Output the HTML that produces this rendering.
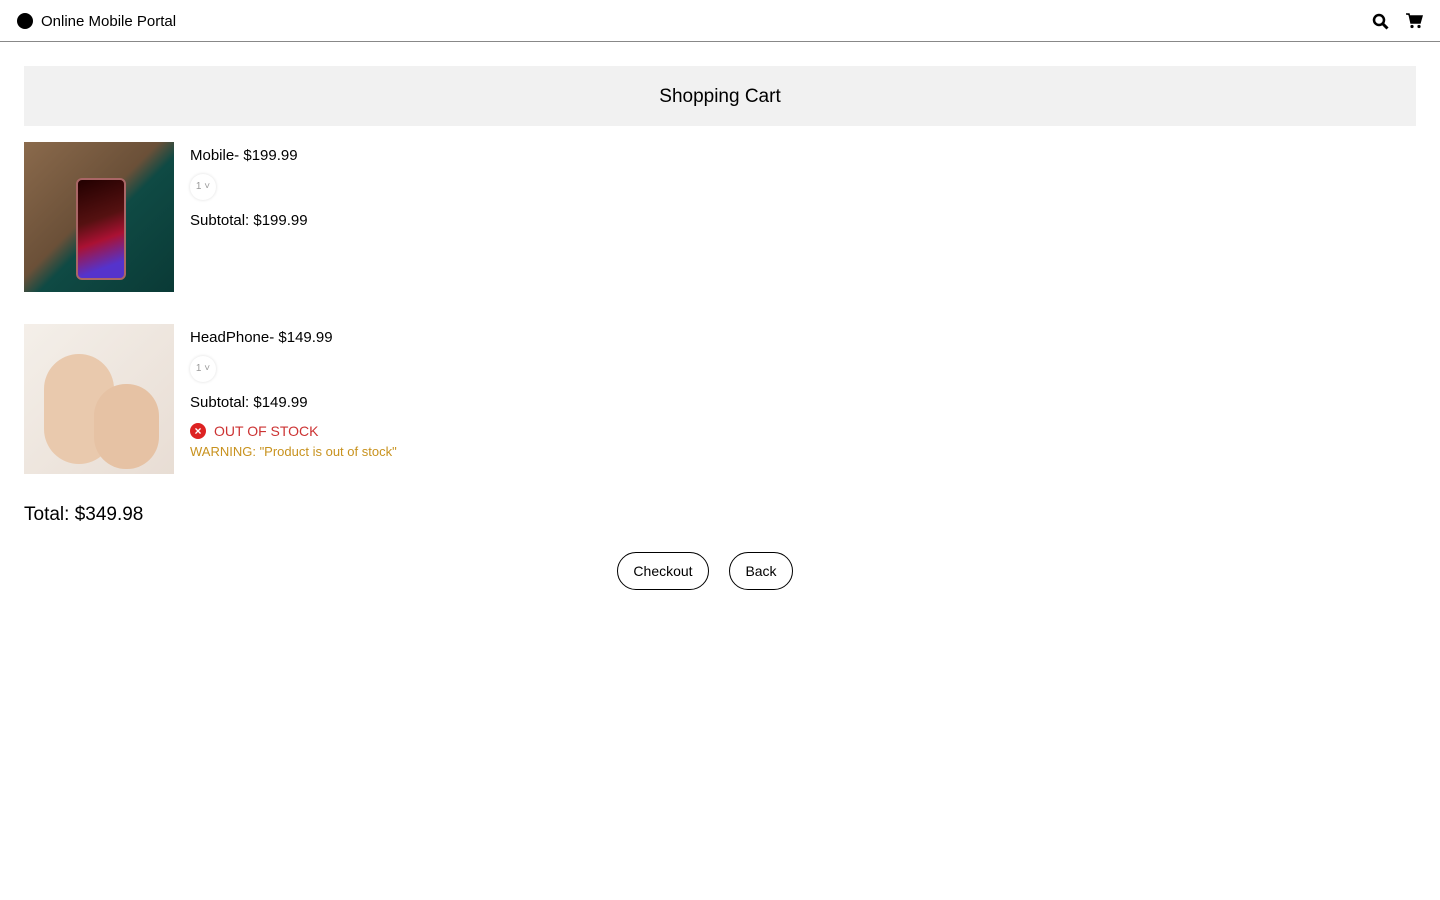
<!DOCTYPE html>
<html><head><style>
body{margin:0;font-family:"Liberation Sans",sans-serif;color:#000;background:#fff}
.nav{height:41px;border-bottom:1px solid #888;position:relative}
.nav .dot{position:absolute;left:17px;top:13px;width:16px;height:16px;border-radius:50%;background:#000}
.nav .t{position:absolute;left:41px;top:13px;font-size:15px}
.hdr{position:absolute;left:24px;top:66px;width:1392px;height:60px;background:#f1f1f1;text-align:center;line-height:62px;font-size:19px}
.img{position:absolute;left:24px;width:150px;height:150px;overflow:hidden}
.tx{position:absolute;left:190px;font-size:15px}
.sel{position:absolute;left:190px;width:26px;height:26px;border-radius:50%;box-shadow:0 0 3px #ddd;font-size:10px;color:#999;line-height:26px;text-align:center}
.btn{position:absolute;top:552px;height:36px;border:1px solid #000;border-radius:19px;font-size:14px;line-height:36px;text-align:center}
</style></head><body>
<div class="nav"><div class="dot"></div><div class="t">Online Mobile Portal</div>
<svg style="position:absolute;left:1372px;top:13px" width="17" height="17" viewBox="0 0 17 17"><circle cx="7" cy="7" r="5" fill="none" stroke="#000" stroke-width="2.5"/><path d="M10.5 10.5L15.5 15.5" stroke="#000" stroke-width="3"/></svg>
<svg style="position:absolute;left:1406px;top:13px" width="17" height="16" viewBox="0 0 17 16"><path d="M0 1h3l2 9h9l2-7H4" fill="#000" stroke="#000" stroke-width="1.5"/><circle cx="6" cy="13.5" r="1.6"/><circle cx="13" cy="13.5" r="1.6"/></svg>
</div>
<div class="hdr">Shopping Cart</div>
<div class="img" style="top:142px;background:linear-gradient(135deg,#8a6a4c 0%,#6b5038 45%,#0f4a44 55%,#0a3a36 100%)"><div style="position:absolute;left:52px;top:36px;width:46px;height:98px;border-radius:6px;background:linear-gradient(160deg,#200 0%,#511 40%,#a13 60%,#53c 85%);border:2px solid #a66"></div></div>
<div class="tx" style="top:147px">Mobile- $199.99</div>
<div class="sel" style="top:174px">1 ˅</div>
<div class="tx" style="top:212px">Subtotal: $199.99</div>
<div class="img" style="top:324px;background:linear-gradient(135deg,#f4efe9,#e8ddd4)"><div style="position:absolute;left:20px;top:30px;width:70px;height:110px;border-radius:35px;background:#e9c9ad"></div><div style="position:absolute;left:70px;top:60px;width:65px;height:85px;border-radius:32px;background:#e6c2a4"></div></div>
<div class="tx" style="top:329px">HeadPhone- $149.99</div>
<div class="sel" style="top:356px">1 ˅</div>
<div class="tx" style="top:394px">Subtotal: $149.99</div>
<div style="position:absolute;left:190px;top:423px;width:16px;height:16px;border-radius:50%;background:#d22;color:#fff;font-size:12px;line-height:16px;text-align:center;font-weight:bold">×</div>
<div class="tx" style="left:214px;top:423px;font-size:14px;color:#c33">OUT OF STOCK</div>
<div class="tx" style="top:444px;font-size:13px;color:#c8921e">WARNING: "Product is out of stock"</div>
<div class="tx" style="left:24px;top:504px;font-size:19px">Total: $349.98</div>
<div class="btn" style="left:617px;width:90px">Checkout</div>
<div class="btn" style="left:729px;width:62px">Back</div>
</body></html>
